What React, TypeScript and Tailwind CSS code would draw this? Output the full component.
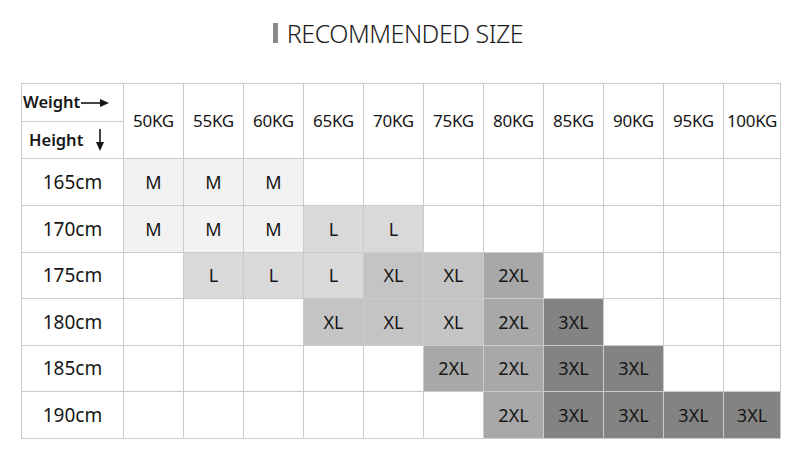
import React from 'react';

const weights = ['50KG', '55KG', '60KG', '65KG', '70KG', '75KG', '80KG', '85KG', '90KG', '95KG', '100KG'];

const rows: { height: string; sizes: string[] }[] = [
  { height: '165cm', sizes: ['M', 'M', 'M', '', '', '', '', '', '', '', ''] },
  { height: '170cm', sizes: ['M', 'M', 'M', 'L', 'L', '', '', '', '', '', ''] },
  { height: '175cm', sizes: ['', 'L', 'L', 'L', 'XL', 'XL', '2XL', '', '', '', ''] },
  { height: '180cm', sizes: ['', '', '', 'XL', 'XL', 'XL', '2XL', '3XL', '', '', ''] },
  { height: '185cm', sizes: ['', '', '', '', '', '2XL', '2XL', '3XL', '3XL', '', ''] },
  { height: '190cm', sizes: ['', '', '', '', '', '', '2XL', '3XL', '3XL', '3XL', '3XL'] },
];

const cellBg: Record<string, string> = {
  '': 'bg-white',
  M: 'bg-[#f2f2f2]',
  L: 'bg-[#d9d9d9]',
  XL: 'bg-[#c4c4c4]',
  '2XL': 'bg-[#a8a8a8]',
  '3XL': 'bg-[#838383]',
};

const cell = 'border-r border-b border-[#cbcbcb] flex items-center justify-center';

export default function App() {
  return (
    <div className="w-[800px] h-[451px] bg-white font-['Noto_Sans',sans-serif] text-[#161616]">
      {/* title */}
      <div className="h-[66px] flex items-center justify-center gap-[9px] pr-[4px]">
        <span className="w-[5px] h-[20px] bg-[#8a8a8a]" />
        <h1 className="text-[25px] font-light tracking-[-0.5px] leading-none text-[#1c1c1c]">RECOMMENDED SIZE</h1>
      </div>

      <div className="mt-[17px] ml-[21px] w-[760px] border-l border-t border-[#cbcbcb] grid grid-cols-[102px_repeat(10,60px)_57px] grid-rows-[75px_47px_47px_46px_47px_46px_47px]">
        <div className="border-r border-b border-[#cbcbcb] flex flex-col">
          <div className="h-[38px] border-b border-[#cbcbcb] flex items-center pl-[1px] gap-[1px]">
            <span className="text-[16.5px] font-semibold">Weight</span>
            <svg width="28" height="10" viewBox="0 0 28 10">
              <line x1="0" y1="5" x2="22" y2="5" stroke="#161616" strokeWidth="1.6" />
              <path d="M19 1 L28 5 L19 9 Z" fill="#161616" />
            </svg>
          </div>
          <div className="flex-1 flex items-center pl-[7px] gap-[12px]">
            <span className="text-[16.5px] font-semibold">Height</span>
            <svg width="10" height="22" viewBox="0 0 10 22">
              <line x1="5" y1="0" x2="5" y2="16" stroke="#161616" strokeWidth="1.6" />
              <path d="M1 13 L5 22 L9 13 Z" fill="#161616" />
            </svg>
          </div>
        </div>
        {weights.map((w) => (
          <div key={w} className={`${cell} text-[17px] tracking-[-0.3px]`}>
            {w}
          </div>
        ))}

        {rows.map((r) => (
          <React.Fragment key={r.height}>
            <div className={`${cell} text-[19px]`}>{r.height}</div>
            {r.sizes.map((s, i) => (
              <div key={i} className={`${cell} ${cellBg[s]} text-[18px]`}>
                {s}
              </div>
            ))}
          </React.Fragment>
        ))}
      </div>
    </div>
  );
}
